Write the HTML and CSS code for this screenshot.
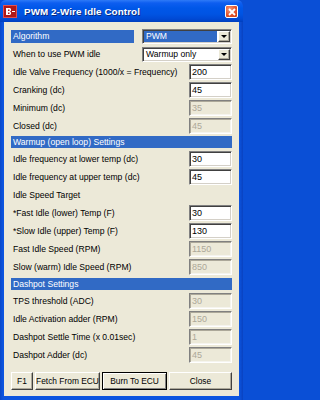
FILE: index.html
```html
<!DOCTYPE html>
<html>
<head>
<meta charset="utf-8">
<link rel="stylesheet" href="styles.css">
</head>
<body>
<div class="window">
  <div class="titlebar">
    <svg class="appicon" width="14" height="13" viewBox="0 0 14 13">
      <rect x="0" y="0" width="14" height="13" fill="#b01818"/>
      <rect x="0.5" y="0.5" width="13" height="12" fill="none" stroke="#e05050"/>
      <path d="M3 3h4l1 1v1.5l-1 1 1 1V9l-1 1H3z M5 4.5v1.5h1.5V4.5z M5 7.5V9h1.5V7.5z" fill="#fff" fill-rule="evenodd"/>
      <path d="M9 6h3v1H9z" fill="#fff"/>
    </svg>
    <span class="title">PWM 2-Wire Idle Control</span>
    <span class="closebtn">
      <svg width="8" height="8" viewBox="0 0 8 8"><path d="M1 1L7 7M7 1L1 7" stroke="#fff" stroke-width="1.8"/></svg>
    </span>
  </div>
  <div class="content">
    <div class="row"><span class="label hl">Algorithm</span><div class="combo"><span class="cval selv">PWM</span><span class="arrow"><i></i></span></div></div>
    <div class="row"><span class="label">When to use PWM idle</span><div class="combo"><span class="cval">Warmup only</span><span class="arrow"><i></i></span></div></div>
    <div class="row"><span class="label">Idle Valve Frequency (1000/x = Frequency)</span><div class="field">200</div></div>
    <div class="row"><span class="label">Cranking (dc)</span><div class="field">45</div></div>
    <div class="row"><span class="label">Minimum (dc)</span><div class="field dis">35</div></div>
    <div class="row"><span class="label">Closed (dc)</span><div class="field dis">45</div></div>
    <div class="header h1">Warmup (open loop) Settings</div>
    <div class="row"><span class="label">Idle frequency at lower temp (dc)</span><div class="field">30</div></div>
    <div class="row"><span class="label">Idle frequency at upper temp (dc)</span><div class="field">45</div></div>
    <div class="row"><span class="label">Idle Speed Target</span></div>
    <div class="row"><span class="label">*Fast Idle (lower) Temp (F)</span><div class="field">30</div></div>
    <div class="row"><span class="label">*Slow Idle (upper) Temp (F)</span><div class="field">130</div></div>
    <div class="row"><span class="label">Fast Idle Speed (RPM)</span><div class="field dis">1150</div></div>
    <div class="row"><span class="label">Slow (warm) Idle Speed (RPM)</span><div class="field dis">850</div></div>
    <div class="header h2">Dashpot Settings</div>
    <div class="row"><span class="label">TPS threshold (ADC)</span><div class="field dis">30</div></div>
    <div class="row"><span class="label">Idle Activation adder (RPM)</span><div class="field dis">150</div></div>
    <div class="row"><span class="label">Dashpot Settle Time (x 0.01sec)</span><div class="field dis">1</div></div>
    <div class="row"><span class="label">Dashpot Adder (dc)</span><div class="field dis">45</div></div>
    <div class="buttons">
      <button class="btn b-f1">F1</button>
      <button class="btn b-mid">Fetch From ECU</button>
      <button class="btn b-mid def">Burn To ECU</button>
      <button class="btn b-close">Close</button>
    </div>
  </div>
</div>
</body>
</html>
```

FILE: styles.css
```css
html, body {
  margin: 0;
  padding: 0;
  background: #0a4fd6;
}
body {
  width: 243px;
  height: 400px;
  overflow: hidden;
  font-family: "Liberation Sans", Arial, sans-serif;
}
.window {
  width: 243px;
  height: 400px;
  box-sizing: border-box;
  display: flex;
  flex-direction: column;
  background: linear-gradient(to right, #0a48c8, #0c55e0 3px, #0c55e0 239px, #0942c0);
  border-radius: 6px 6px 0 0;
  overflow: hidden;
}
.titlebar {
  height: 22px;
  flex: none;
  display: flex;
  align-items: center;
  padding: 0 6px 0 3px;
  background: linear-gradient(#2e7af7 0, #0d5ef0 3px, #0057e8 8px, #0054e3 14px, #0049d4 19px, #003fbe 22px);
}
.appicon {
  flex: none;
}
.title {
  margin-left: 7px;
  color: #fff;
  font-weight: bold;
  font-size: 9.8px;
  letter-spacing: 0.1px;
  text-shadow: 1px 1px 0 #0a2a80;
  flex: 1;
  white-space: nowrap;
}
.closebtn {
  width: 13px;
  height: 13px;
  box-sizing: border-box;
  border: 1px solid #fff;
  border-radius: 2px;
  background: radial-gradient(circle at 35% 30%, #f59a7a 0, #e4552f 55%, #c63a12 100%);
  display: flex;
  align-items: center;
  justify-content: center;
  margin-top: 1px;
  margin-right: -1px;
}
.closebtn svg { display: block; }
.content {
  flex: 1;
  margin: 0 4px 4px 4px;
  background: #ece9d8;
  padding: 6px 7px 0 7px;
  display: flex;
  flex-direction: column;
  font-size: 8.6px;
  color: #000;
}
.row {
  height: 16px;
  margin-bottom: 2px;
  display: flex;
  align-items: center;
  justify-content: space-between;
  flex: none;
}
.label {
  padding-left: 2px;
  white-space: nowrap;
}
.label.hl {
  background: #316ac5;
  color: #fff;
  width: 121px;
  height: 13px;
  line-height: 13px;
}
.combo {
  width: 90px;
  height: 15px;
  box-sizing: border-box;
  background: #fff;
  border-top: 1px solid #808080;
  border-left: 1px solid #808080;
  border-right: 1px solid #fff;
  border-bottom: 1px solid #fff;
  box-shadow: inset 1px 1px 0 #404040, inset -1px -1px 0 #d4d0c8;
  display: flex;
  align-items: stretch;
  padding: 1px;
}
.cval {
  flex: 1;
  padding-left: 2px;
  line-height: 11px;
  margin: 0 1px 0 0;
}
.cval.selv {
  background: #316ac5;
  color: #fff;
}
.arrow {
  width: 12px;
  flex: none;
  box-sizing: border-box;
  background: #ece9d8;
  border-top: 1px solid #fff;
  border-left: 1px solid #fff;
  border-right: 1px solid #404040;
  border-bottom: 1px solid #404040;
  box-shadow: inset -1px -1px 0 #aca899;
  display: flex;
  align-items: center;
  justify-content: center;
}
.arrow i {
  display: block;
  width: 0;
  height: 0;
  border-left: 3px solid transparent;
  border-right: 3px solid transparent;
  border-top: 3px solid #000;
}
.field {
  width: 43px;
  height: 16px;
  box-sizing: border-box;
  background: #fff;
  border-top: 1px solid #808080;
  border-left: 1px solid #808080;
  border-right: 1px solid #fff;
  border-bottom: 1px solid #fff;
  box-shadow: inset 1px 1px 0 #404040, inset -1px -1px 0 #d4d0c8;
  padding-left: 2px;
  line-height: 14px;
  font-size: 9px;
}
.field.dis {
  background: #ece9d8;
  color: #aca899;
  box-shadow: inset 1px 1px 0 #aca899, inset -1px -1px 0 #f5f4ee;
}
.header {
  flex: none;
  background: #316ac5;
  color: #fff;
  height: 12px;
  line-height: 12px;
  padding-left: 2px;
}
.h1 { margin: 0 0 3px 0; }
.h2 { margin: 1px 0 3px 0; }
.buttons {
  display: flex;
  gap: 2px;
  margin-top: 7px;
}
.btn {
  height: 18px;
  box-sizing: border-box;
  font-family: "Liberation Sans", Arial, sans-serif;
  font-size: 8.4px;
  color: #000;
  background: #ece9d8;
  border-top: 1px solid #fff;
  border-left: 1px solid #fff;
  border-right: 1px solid #404040;
  border-bottom: 1px solid #404040;
  box-shadow: inset -1px -1px 0 #aca899;
  padding: 0;
  margin: 0;
  white-space: nowrap;
}
.btn.def {
  border: 1px solid #000;
  box-shadow: inset 1px 1px 0 #fff, inset -1px -1px 0 #808080;
}
.b-f1 { width: 22px; }
.b-mid { width: 65px; }
.b-close { width: 63px; }
```
